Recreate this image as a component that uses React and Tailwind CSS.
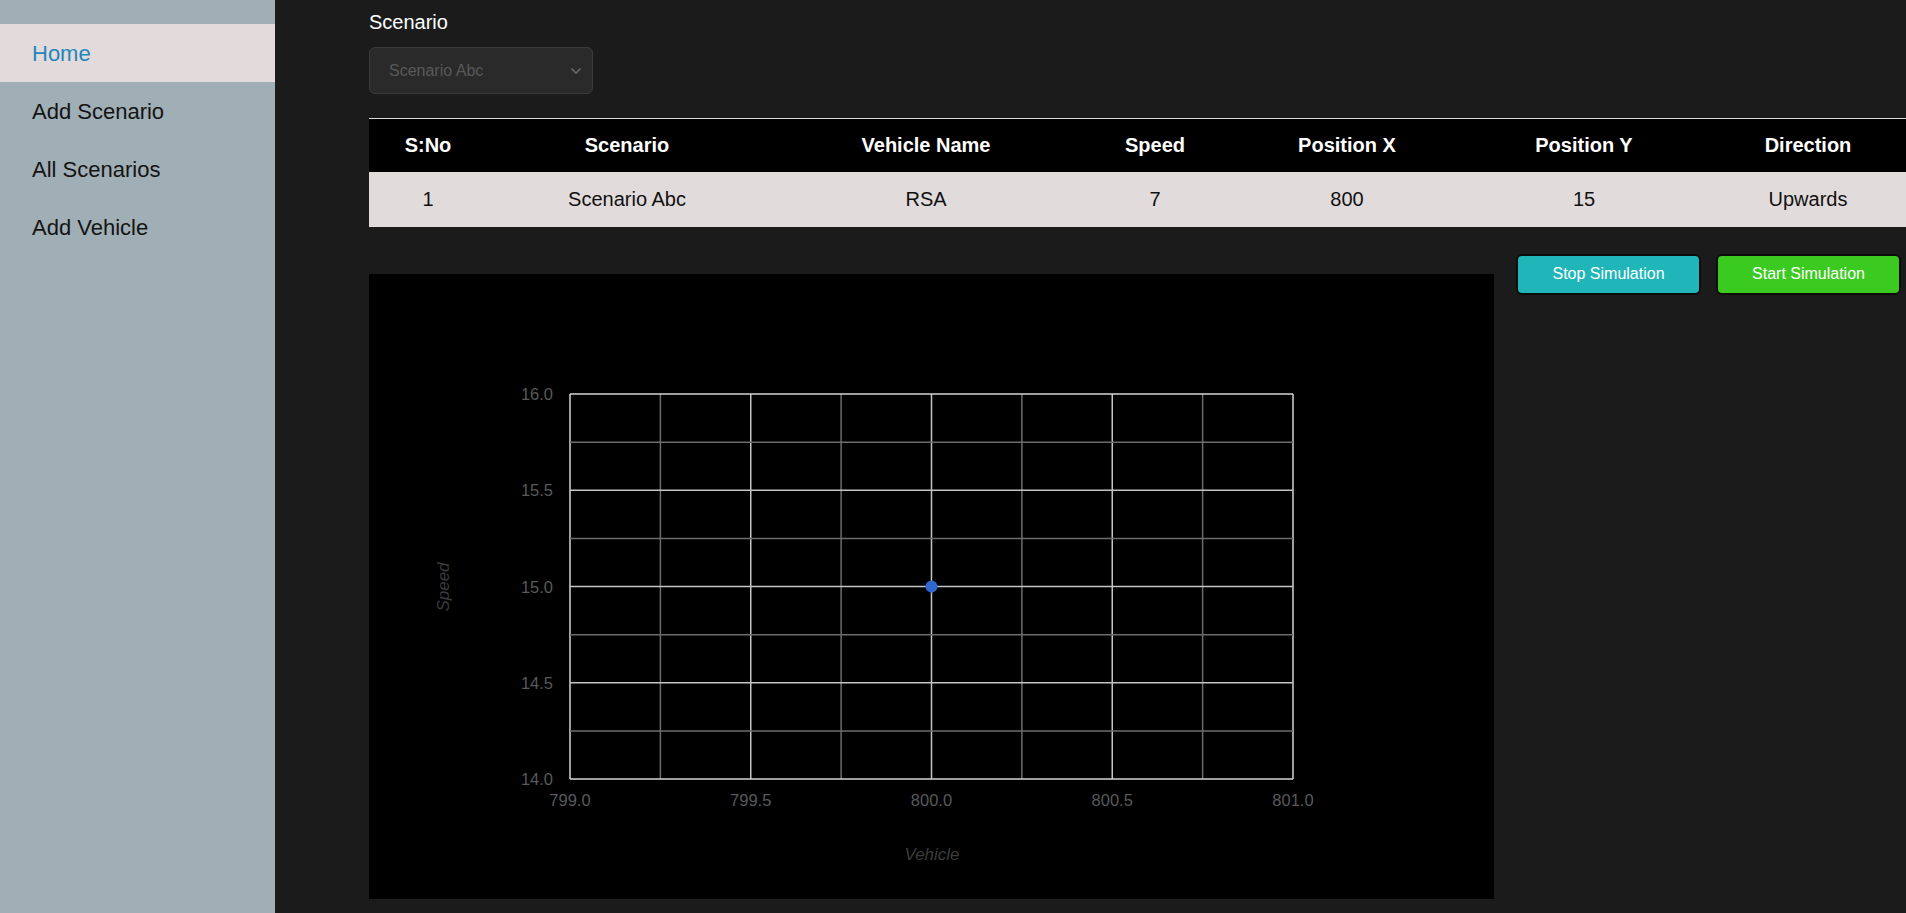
import { useState } from 'react';

const NAV_ITEMS = ['Home', 'Add Scenario', 'All Scenarios', 'Add Vehicle'];

const COLUMNS = [
    { label: 'S:No', width: 'w-[118px]' },
    { label: 'Scenario', width: 'w-[280px]' },
    { label: 'Vehicle Name', width: 'w-[318px]' },
    { label: 'Speed', width: 'w-[140px]' },
    { label: 'Position X', width: 'w-[244px]' },
    { label: 'Position Y', width: 'w-[230px]' },
    { label: 'Direction', width: 'w-[218px]' },
];

const ROWS = [
    { id: 1, scenario: 'Scenario Abc', vehicle: 'RSA', speed: 7, x: 800, y: 15, direction: 'Upwards' },
];

// plot area inside the 1125x625 chart box
const PLOT = { left: 201, top: 120, width: 723, height: 385 };
const X_MIN = 799;
const X_MAX = 801;
const Y_MIN = 14;
const Y_MAX = 16;

function Sidebar({ active, onSelect }) {
    return (
        <aside className="w-[275px] shrink-0 bg-[#a0aeb5] pt-[24px]">
            {NAV_ITEMS.map((item) => (
                <button
                    key={item}
                    onClick={() => onSelect(item)}
                    className={`flex h-[58px] w-full items-center pl-[32px] text-left text-[22px] ${
                        active === item ? 'bg-[#e3dbdb] text-[#2586bd]' : 'text-[#141414]'
                    }`}
                >
                    {item}
                </button>
            ))}
        </aside>
    );
}

function ScatterChart({ points }) {
    const sx = (v) => PLOT.left + ((v - X_MIN) / (X_MAX - X_MIN)) * PLOT.width;
    const sy = (v) => PLOT.top + PLOT.height - ((v - Y_MIN) / (Y_MAX - Y_MIN)) * PLOT.height;

    const steps = [0, 1, 2, 3, 4, 5, 6, 7, 8];
    const font = '"Liberation Sans", Arial, sans-serif';

    return (
        <svg width="1125" height="625" viewBox="0 0 1125 625" className="block">
            {/* vertical grid */}
            {steps.map((i) => {
                const x = PLOT.left + (i * PLOT.width) / 8;
                const major = i % 2 === 0;
                return (
                    <line
                        key={`v${i}`}
                        x1={x}
                        x2={x}
                        y1={PLOT.top}
                        y2={PLOT.top + PLOT.height}
                        stroke={i === 0 || i === 8 ? '#d4d4d4' : major ? '#c4c4c4' : '#6c6c6c'}
                        strokeWidth="1.5"
                    />
                );
            })}
            {/* horizontal grid */}
            {steps.map((i) => {
                const y = PLOT.top + (i * PLOT.height) / 8;
                const major = i % 2 === 0;
                return (
                    <line
                        key={`h${i}`}
                        x1={PLOT.left}
                        x2={PLOT.left + PLOT.width}
                        y1={y}
                        y2={y}
                        stroke={i === 0 || i === 8 ? '#d4d4d4' : major ? '#c4c4c4' : '#6c6c6c'}
                        strokeWidth="1.5"
                    />
                );
            })}

            {/* y ticks */}
            {[16, 15.5, 15, 14.5, 14].map((v) => (
                <text
                    key={`yt${v}`}
                    x={184}
                    y={sy(v)}
                    textAnchor="end"
                    dominantBaseline="central"
                    fill="#565a5c"
                    fontSize="16.5"
                    fontFamily={font}
                >
                    {v.toFixed(1)}
                </text>
            ))}

            {/* x ticks */}
            {[799, 799.5, 800, 800.5, 801].map((v) => (
                <text
                    key={`xt${v}`}
                    x={sx(v)}
                    y={526}
                    textAnchor="middle"
                    dominantBaseline="central"
                    fill="#565a5c"
                    fontSize="16.5"
                    fontFamily={font}
                >
                    {v.toFixed(1)}
                </text>
            ))}

            {/* axis titles */}
            <text
                x={74}
                y={313}
                transform="rotate(-90 74 313)"
                textAnchor="middle"
                dominantBaseline="central"
                fill="#3c3c3c"
                fontSize="17"
                fontStyle="italic"
                fontFamily={font}
            >
                Speed
            </text>
            <text
                x={563}
                y={580}
                textAnchor="middle"
                dominantBaseline="central"
                fill="#3c3c3c"
                fontSize="17"
                fontStyle="italic"
                fontFamily={font}
            >
                Vehicle
            </text>

            {points.map((p) => (
                <circle key={p.id} cx={sx(p.x)} cy={sy(p.y)} r="6" fill="#3068d1" />
            ))}
        </svg>
    );
}

export default function App() {
    const [active, setActive] = useState('Home');

    return (
        <div className="flex min-h-[913px] font-['Liberation_Sans',Arial,sans-serif]">
            <Sidebar active={active} onSelect={setActive} />

            <main className="flex-1 overflow-hidden bg-[#1b1b1b] pl-[94px]">
                {/* Scenario picker */}
                <label className="block pt-[12px] text-[20px] leading-[20px] text-white">Scenario</label>
                <div className="mt-[15px] flex h-[47px] w-[224px] items-center justify-between rounded-[6px] border border-[#3b3b3b] bg-[#2a2a2a] pl-[19px] pr-[10px]">
                    <span className="text-[16px] text-[#595959]">Scenario Abc</span>
                    <svg width="12" height="8" viewBox="0 0 12 8" fill="none">
                        <path d="M1.5 1.5 6 6l4.5-4.5" stroke="#6a6a6a" strokeWidth="1.6" />
                    </svg>
                </div>

                {/* Vehicles table */}
                <table className="mt-[24px] w-[1548px] table-fixed border-collapse border-t border-[#d9d9d9] text-center text-[20px]">
                    <colgroup>
                        {COLUMNS.map((col) => (
                            <col key={col.label} className={col.width} />
                        ))}
                    </colgroup>
                    <thead>
                        <tr className="h-[53px] bg-black text-white">
                            {COLUMNS.map((col) => (
                                <th key={col.label} className="font-bold">
                                    {col.label}
                                </th>
                            ))}
                        </tr>
                    </thead>
                    <tbody>
                        {ROWS.map((row) => (
                            <tr key={row.id} className="h-[55px] bg-[#e2dbdb] text-[#111]">
                                <td>{row.id}</td>
                                <td>{row.scenario}</td>
                                <td>{row.vehicle}</td>
                                <td>{row.speed}</td>
                                <td>{row.x}</td>
                                <td>{row.y}</td>
                                <td>{row.direction}</td>
                            </tr>
                        ))}
                    </tbody>
                </table>

                {/* Chart + controls */}
                <div className="mt-[27px] flex items-start gap-[22px]">
                    <div className="mt-[20px] h-[625px] w-[1125px] shrink-0 bg-black">
                        <ScatterChart points={ROWS} />
                    </div>
                    <div className="flex gap-[15px]">
                        <button className="h-[41px] w-[185px] rounded-[6px] border-2 border-[#0c0c0c] bg-[#20b5b8] text-[16px] text-white">
                            Stop Simulation
                        </button>
                        <button className="h-[41px] w-[185px] rounded-[6px] border-2 border-[#0c0c0c] bg-[#3bca1f] text-[16px] text-white">
                            Start Simulation
                        </button>
                    </div>
                </div>
            </main>
        </div>
    );
}
